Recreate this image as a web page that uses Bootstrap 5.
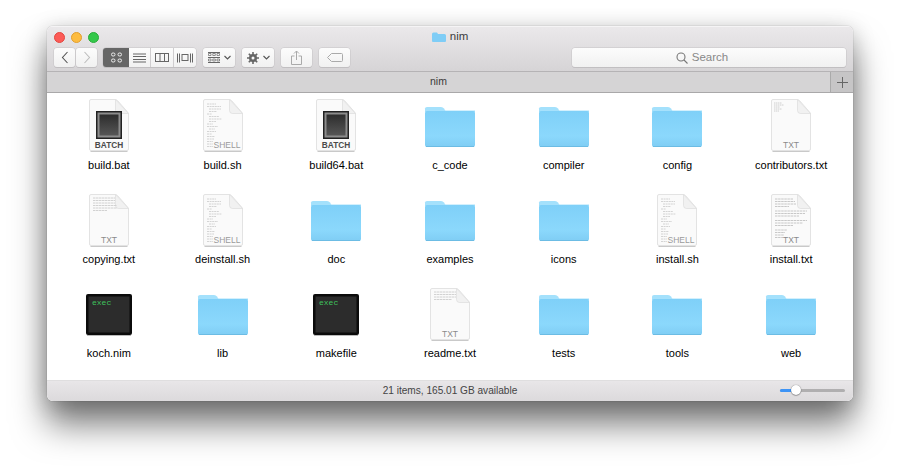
<!DOCTYPE html>
<html lang="en">
<head>
<meta charset="UTF-8">
<title>nim</title>
<link href="https://cdn.jsdelivr.net/npm/bootstrap@5.3.3/dist/css/bootstrap.min.css" rel="stylesheet">
<style>
  html, body { background: #fff; height: 468px; overflow: hidden; }
  body { font-family: "Liberation Sans", Arial, sans-serif; padding: 26px 47px 0; }
  .finder-win { width: 806px; height: 375px; border-radius: 6px; overflow: hidden; background: #fff; }
  .win-frame { width: 806px; height: 375px; border-radius: 6px; box-shadow: 0 24px 34px rgba(0,0,0,.5), 0 4px 22px rgba(0,0,0,.22), 0 0 1px rgba(0,0,0,.5); }
  .top-bar { height: 46px; background: linear-gradient(#ebe9eb, #d6d4d6); border-bottom: 1px solid #b5b3b5; box-shadow: inset 0 1px 0 #f5f4f5; }
  .title-row { height: 22px; display: grid; grid-template-columns: 1fr auto 1fr; align-items: center; padding: 0 7px; }
  .lights { gap: 6px; }
  .light { width: 11px; height: 11px; border-radius: 50%; }
  .l-red { background: #fc5b57; border: 1px solid #e2463f; }
  .l-yel { background: #fdbc40; border: 1px solid #e09e2e; }
  .l-grn { background: #34c84a; border: 1px solid #2aac3b; }
  .win-title { font-size: 11.5px; color: #3c3c3c; gap: 4px; }
  .tool-row { height: 20px; padding: 0 7px; }
  .nav-pair { gap: 1px; }
  .tb-btn { height: 19px; padding: 0; border: 0; border-radius: 3px; background: linear-gradient(#fcfcfc, #f1f1f1); box-shadow: 0 0 0 .5px #c6c4c6, 0 1px 0 #bdbbbd; }
  .seg-wrap { height: 19px; margin-left: 6px; border-radius: 3px; overflow: hidden; box-shadow: 0 0 0 .5px #c6c4c6, 0 1px 0 #bdbbbd; }
  .seg-btn { height: 19px; background: linear-gradient(#fcfcfc, #f1f1f1); border-right: 1px solid #cfcdcf; }
  .seg-btn:last-child { border-right: 0; }
  .seg-wrap .seg-on { background: #666; border-right: 0; }
  .bw-21 { width: 21px; }
  .bw-22 { width: 22px; }
  .bw-23 { width: 23px; }
  .bw-26 { width: 26px; }
  .bw-31 { width: 31px; margin-left: 7px; }
  .bw-32 { width: 32px; margin-left: 7px; }
  .search-box { width: 274px; height: 19px; padding-right: 14px; font-size: 11.5px; color: #888; gap: 4px; }
  .tab-bar { height: 21px; background: #d5d4d5; border-bottom: 1px solid #a9a8a9; }
  .tab-name { font-size: 10.5px; color: #3a3a3a; }
  .tab-plus { width: 23px; border-left: 1px solid #aaa; background: #c6c5c6; }
  .file-grid { display: grid; grid-template-columns: repeat(7, 1fr); grid-auto-rows: 94px; padding: 0 5px; height: 287px; }
  .file-item svg { display: block; }
  .sheet-low use { transform: translateY(1px); }
  .file-name { font-size: 11px; line-height: 14px; margin-top: 1px; color: #000; white-space: nowrap; }
  .status-bar { height: 21px; background: linear-gradient(#e8e6e8, #dcdadc); border-top: 1px solid #dfdedf; }
  .status-text { font-size: 10.1px; color: #444; }
  .zoom-wrap { width: 65px; height: 12px; right: 8px; top: 3px; }
  .zoom-track { left: 0; right: 0; top: 5px; height: 3px; border-radius: 2px; background: #b0afb0; }
  .zoom-fill { left: 0; width: 16px; top: 5px; height: 3px; border-radius: 2px; background: #3d94f6; }
  .zoom-knob { left: 11px; top: 1px; width: 10px; height: 10px; border-radius: 50%; background: #fff; box-shadow: 0 0 1px rgba(0,0,0,.6), 0 1px 1px rgba(0,0,0,.25); }
</style>
</head>
<body>
<svg width="0" height="0" class="position-absolute">
  <defs>
    <linearGradient id="fold" x1="0" y1="0" x2="0" y2="1"><stop offset="0" stop-color="#7fd0f8"/><stop offset=".7" stop-color="#8bd8fc"/><stop offset="1" stop-color="#7fcdf4"/></linearGradient>
    <linearGradient id="scr" x1="0" y1="0" x2="0" y2="1"><stop offset="0" stop-color="#2d2d2d"/><stop offset="1" stop-color="#565656"/></linearGradient>
    <symbol id="i-folder" viewBox="0 0 64 64">
      <path d="M7 18v-2.500q0-1.500 2-1.500h14q2 0 3 1.500l1.500 2.500z" fill="#a4e1fc"/>
      <path d="M7 17.500h50v1.500H7z" fill="#a7e2fb"/>
      <path d="M7 20q0-2 2-2h46q2 0 2 2v32q0 2-2 2H9q-2 0-2-2z" fill="url(#fold)"/>
      <path d="M8 53.500h48" stroke="#6cbce4" stroke-width="1"/>
    </symbol>
    <symbol id="i-page" viewBox="0 0 64 64">
      <path d="M12.500 8q0-1.500 1.500-1.500h24.500q1 0 2 1l10 11.500q1 1 1 2v35q0 1.500-1.500 1.500H14q-1.500 0-1.500-1.500z" fill="#fafafa" stroke="#e3e3e3"/>
      <path d="M38.500 6.500v11q0 3 3 3h10z" fill="#f1f1f1" stroke="#dcdcdc" stroke-width=".7"/>
      <path d="M13.500 58.500h37" stroke="#c9c9c9"/>
    </symbol>
    <symbol id="i-batch" viewBox="0 0 64 64">
      <use href="#i-page"/>
      <rect x="19" y="18" width="26" height="28" fill="#222"/>
      <rect x="20.500" y="19.500" width="23" height="25" fill="#8c8c8c"/>
      <rect x="22.500" y="21.500" width="19" height="21" fill="url(#scr)"/>
      <text x="32" y="54.500" text-anchor="middle" font-size="8.300" font-weight="700" fill="#4a4a4a" font-family="Liberation Sans, sans-serif">BATCH</text>
    </symbol>
    <symbol id="i-shell" viewBox="0 0 64 64">
      <use href="#i-page"/>
      <path d="M16 11h9M16 13.500h14M18 16h12M18 18.500h8M16 21h5M18 23.500h10M18 26h13M18 28.500h7M16 31h6M16 33.500h11M18 36h6M16 38.500h9M16 41h5M16 43.500h8M16 46h7M16 48.500h6M16 51h6M16 53.500h6" stroke="#cfcfcf" stroke-width=".9" stroke-dasharray="2 .6" fill="none"/>
      <text x="36" y="54.500" text-anchor="middle" font-size="8.500" fill="#9a9a9a" font-family="Liberation Sans, sans-serif">SHELL</text>
    </symbol>
    <symbol id="i-txt" viewBox="0 0 64 64">
      <use href="#i-page"/>
      <text x="32" y="54.500" text-anchor="middle" font-size="8.500" fill="#8a8a8a" font-family="Liberation Sans, sans-serif">TXT</text>
    </symbol>
    <symbol id="i-txtlines" viewBox="0 0 64 64">
      <use href="#i-txt"/>
      <path d="M16 11h18M16 13.500h20M16 16h21M16 18.500h14M16 23h32M16 25.500h30M16 28h24M16 32.500h32M16 35h28M16 37.500h18M16 42h12M16 44.500h10M16 47h9M16 49.500h8" stroke="#c2c2c2" stroke-width=".9" stroke-dasharray="2.500 .6" fill="none"/>
    </symbol>
    <symbol id="i-copying" viewBox="0 0 64 64">
      <use href="#i-txt"/>
      <path d="M16 10h22M16 12.500h22M16 15h22M16 17.500h24M16 20h24M16 22.500h14" stroke="#cdcdcd" stroke-width=".9" stroke-dasharray="2.500 .5" fill="none"/>
    </symbol>
    <symbol id="i-readme" viewBox="0 0 64 64">
      <use href="#i-txt"/>
      <path d="M16 10h22M16 12.500h22M16 15h22M16 17.500h18" stroke="#cdcdcd" stroke-width=".9" stroke-dasharray="2.500 .5" fill="none"/>
    </symbol>
    <symbol id="i-contrib" viewBox="0 0 64 64">
      <use href="#i-txt"/>
      <path d="M15 10h8M15 12h10M15 14h6M15 16h8M15 18h5" stroke="#c4c4c4" stroke-width=".8" stroke-dasharray="1.500 .5" fill="none"/>
    </symbol>
    <symbol id="i-exec" viewBox="0 0 64 64">
      <rect x="9" y="13" width="46" height="41" rx="2" fill="#0b0b0b"/>
      <rect x="11.500" y="15.500" width="41" height="36" fill="#2c2c2c"/>
      <path d="M10 54.500h44" stroke="#bbb"/>
      <text x="15" y="24" font-size="8" fill="#3fc25c" font-family="Liberation Mono, monospace">exec</text>
    </symbol>
  </defs>
</svg>

<div class="win-frame">
<div class="finder-win d-flex flex-column">
  <div class="top-bar flex-shrink-0">
    <div class="title-row">
      <div class="lights d-flex">
        <div class="light l-red"></div><div class="light l-yel"></div><div class="light l-grn"></div>
      </div>
      <div class="win-title d-flex align-items-center">
        <svg width="14" height="11" viewBox="0 0 14 11"><path d="M0 2q0-1.500 1.500-1.500h3.500l1 1.500h6.500q1.500 0 1.500 1.500v5.500q0 1-1 1H1q-1 0-1-1z" fill="#7fcdf6"/></svg>
        <span>nim</span>
      </div>
      <div></div>
    </div>
    <div class="tool-row d-flex align-items-start">
      <div class="nav-pair d-flex">
        <button class="tb-btn bw-21 d-flex align-items-center justify-content-center"><svg width="8" height="13" viewBox="0 0 8 13"><path d="M6.500 1 1.500 6.500l5 5.500" fill="none" stroke="#555" stroke-width="1.100"/></svg></button>
        <button class="tb-btn bw-21 d-flex align-items-center justify-content-center"><svg width="8" height="13" viewBox="0 0 8 13"><path d="M1.500 1l5 5.500-5 5.500" fill="none" stroke="#bdbdbd" stroke-width="1.100"/></svg></button>
      </div>
      <div class="seg-wrap d-flex">
        <div class="seg-btn seg-on bw-26 d-flex align-items-center justify-content-center"><svg width="13" height="11" viewBox="0 0 13 11" fill="none" stroke="#f2f2f2" stroke-width="1"><rect x="1.500" y="1" width="3.500" height="3" rx="1.400"/><rect x="8" y="1" width="3.500" height="3" rx="1.400"/><rect x="1.500" y="7" width="3.500" height="3" rx="1.400"/><rect x="8" y="7" width="3.500" height="3" rx="1.400"/></svg></div>
        <div class="seg-btn bw-22 d-flex align-items-center justify-content-center"><svg width="13" height="10" viewBox="0 0 13 10" stroke="#666" stroke-width="1"><path d="M0 1h13M0 3.500h13M0 6.500h13M0 9h13"/></svg></div>
        <div class="seg-btn bw-23 d-flex align-items-center justify-content-center"><svg width="14" height="10" viewBox="0 0 14 10" fill="none" stroke="#666" stroke-width="1"><rect x=".5" y=".5" width="13" height="8"/><path d="M5 .5v8M9.500 .5v8"/></svg></div>
        <div class="seg-btn bw-22 d-flex align-items-center justify-content-center"><svg width="16" height="10" viewBox="0 0 16 10" fill="none" stroke="#666" stroke-width="1"><rect x="5" y="1.500" width="6" height="6"/><path d="M.5 .5v9M2.500 .5v9M13.500 .5v9M15.500 .5v9"/></svg></div>
      </div>
      <button class="tb-btn bw-32 d-flex align-items-center justify-content-center gap-1"><svg width="12" height="11" viewBox="0 0 12 11" fill="none" stroke="#666" stroke-width="1"><path d="M0 .5h12M0 5.500h12M0 10.500h12"/><path d="M.5 1.500h2.500v2H.5zM4.800 1.500h2.500v2H4.800zM9 1.500h2.500v2H9zM.5 7h2.500v2H.5zM4.800 7h2.500v2H4.800zM9 7h2.500v2H9z" stroke-width=".7"/></svg><svg width="7" height="5" viewBox="0 0 7 5"><path d="M.5 1l3 3 3-3" fill="none" stroke="#555" stroke-width="1.100"/></svg></button>
      <button class="tb-btn bw-32 d-flex align-items-center justify-content-center gap-1"><svg width="12" height="12" viewBox="0 0 12 12"><circle cx="6" cy="6" r="2.800" fill="none" stroke="#666" stroke-width="2.400"/><path d="M6 0v12M0 6h12M1.800 1.800l8.400 8.400M10.200 1.800l-8.400 8.400" stroke="#666" stroke-width="1.600"/><circle cx="6" cy="6" r="1.500" fill="#f7f7f7"/></svg><svg width="7" height="5" viewBox="0 0 7 5"><path d="M.5 1l3 3 3-3" fill="none" stroke="#555" stroke-width="1.100"/></svg></button>
      <button class="tb-btn bw-31 d-flex align-items-center justify-content-center"><svg width="11" height="15" viewBox="0 0 11 15" fill="none" stroke="#aaa" stroke-width="1"><path d="M3.500 6H.5v8.500h10V6h-3M5.500 10V1M3 3.500 5.500 1 8 3.500"/></svg></button>
      <button class="tb-btn bw-31 d-flex align-items-center justify-content-center"><svg width="16" height="9" viewBox="0 0 16 9" fill="none" stroke="#aaa" stroke-width="1"><path d="M15.500 1.500q0-1-1-1H4.500L.5 4.500l4 4h10q1 0 1-1z"/></svg></button>
      <div class="tb-btn search-box ms-auto d-flex align-items-center justify-content-center">
        <svg width="12" height="12" viewBox="0 0 12 12" fill="none" stroke="#777" stroke-width="1.100"><circle cx="5" cy="5" r="4"/><path d="M8 8l3.500 3.500"/></svg>
        <span>Search</span>
      </div>
    </div>
  </div>

  <div class="tab-bar d-flex flex-shrink-0">
    <div class="tab-name flex-grow-1 d-flex align-items-center justify-content-center">nim</div>
    <div class="tab-plus d-flex align-items-center justify-content-center"><svg width="11" height="11" viewBox="0 0 11 11"><path d="M5.500 0v11M0 5.500h11" stroke="#666" stroke-width="1"/></svg></div>
  </div>

  <div class="file-grid flex-grow-1 bg-white">
    <div class="file-item d-flex flex-column align-items-center"><svg width="64" height="64"><use href="#i-batch"/></svg><div class="file-name">build.bat</div></div>
    <div class="file-item d-flex flex-column align-items-center"><svg width="64" height="64"><use href="#i-shell"/></svg><div class="file-name">build.sh</div></div>
    <div class="file-item d-flex flex-column align-items-center"><svg width="64" height="64"><use href="#i-batch"/></svg><div class="file-name">build64.bat</div></div>
    <div class="file-item d-flex flex-column align-items-center"><svg width="64" height="64"><use href="#i-folder"/></svg><div class="file-name">c_code</div></div>
    <div class="file-item d-flex flex-column align-items-center"><svg width="64" height="64"><use href="#i-folder"/></svg><div class="file-name">compiler</div></div>
    <div class="file-item d-flex flex-column align-items-center"><svg width="64" height="64"><use href="#i-folder"/></svg><div class="file-name">config</div></div>
    <div class="file-item d-flex flex-column align-items-center"><svg width="64" height="64"><use href="#i-contrib"/></svg><div class="file-name">contributors.txt</div></div>

    <div class="file-item d-flex flex-column align-items-center"><svg class="sheet-low" width="64" height="64"><use href="#i-copying"/></svg><div class="file-name">copying.txt</div></div>
    <div class="file-item d-flex flex-column align-items-center"><svg class="sheet-low" width="64" height="64"><use href="#i-shell"/></svg><div class="file-name">deinstall.sh</div></div>
    <div class="file-item d-flex flex-column align-items-center"><svg width="64" height="64"><use href="#i-folder"/></svg><div class="file-name">doc</div></div>
    <div class="file-item d-flex flex-column align-items-center"><svg width="64" height="64"><use href="#i-folder"/></svg><div class="file-name">examples</div></div>
    <div class="file-item d-flex flex-column align-items-center"><svg width="64" height="64"><use href="#i-folder"/></svg><div class="file-name">icons</div></div>
    <div class="file-item d-flex flex-column align-items-center"><svg class="sheet-low" width="64" height="64"><use href="#i-shell"/></svg><div class="file-name">install.sh</div></div>
    <div class="file-item d-flex flex-column align-items-center"><svg class="sheet-low" width="64" height="64"><use href="#i-txtlines"/></svg><div class="file-name">install.txt</div></div>

    <div class="file-item d-flex flex-column align-items-center"><svg width="64" height="64"><use href="#i-exec"/></svg><div class="file-name">koch.nim</div></div>
    <div class="file-item d-flex flex-column align-items-center"><svg width="64" height="64"><use href="#i-folder"/></svg><div class="file-name">lib</div></div>
    <div class="file-item d-flex flex-column align-items-center"><svg width="64" height="64"><use href="#i-exec"/></svg><div class="file-name">makefile</div></div>
    <div class="file-item d-flex flex-column align-items-center"><svg class="sheet-low" width="64" height="64"><use href="#i-readme"/></svg><div class="file-name">readme.txt</div></div>
    <div class="file-item d-flex flex-column align-items-center"><svg width="64" height="64"><use href="#i-folder"/></svg><div class="file-name">tests</div></div>
    <div class="file-item d-flex flex-column align-items-center"><svg width="64" height="64"><use href="#i-folder"/></svg><div class="file-name">tools</div></div>
    <div class="file-item d-flex flex-column align-items-center"><svg width="64" height="64"><use href="#i-folder"/></svg><div class="file-name">web</div></div>
  </div>

  <div class="status-bar flex-shrink-0 position-relative d-flex align-items-center justify-content-center">
    <div class="status-text">21 items, 165.01 GB available</div>
    <div class="zoom-wrap position-absolute">
      <div class="zoom-track position-absolute"></div>
      <div class="zoom-fill position-absolute"></div>
      <div class="zoom-knob position-absolute"></div>
    </div>
  </div>
</div>
</div>
<script src="https://cdn.jsdelivr.net/npm/bootstrap@5.3.3/dist/js/bootstrap.bundle.min.js"></script>
</body>
</html>
